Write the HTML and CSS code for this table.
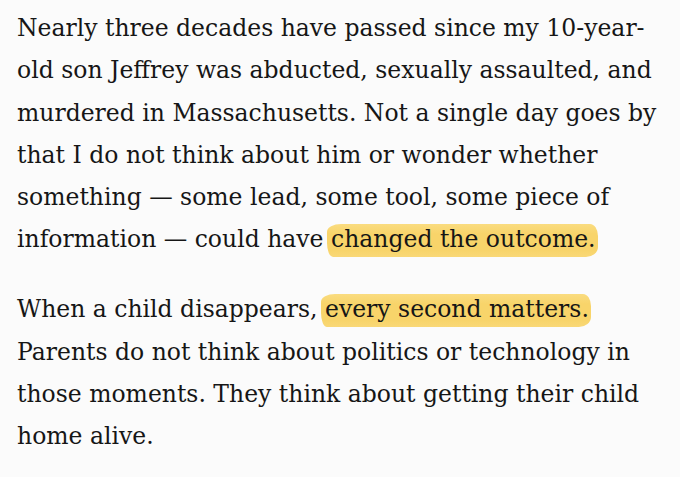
FILE: index.html
```html
<!DOCTYPE html>
<html lang="en">
<head>
<meta charset="utf-8">
<title>Article</title>
<link rel="stylesheet" href="styles.css">
</head>
<body>
<article class="article">
  <p class="para">Nearly three decades have passed since my 10-year-<br>old son Jeffrey was abducted, sexually assaulted, and<br>murdered in Massachusetts. Not a single day goes by<br>that I do not think about him or wonder whether<br>something — some lead, some tool, some piece of<br>information — could have <mark class="hl">changed the outcome.</mark></p>
  <p class="para">When a child disappears, <mark class="hl">every second matters.</mark><br>Parents do not think about politics or technology in<br>those moments. They think about getting their child<br>home alive.</p>
</article>
</body>
</html>
```

FILE: styles.css
```css
html, body {
  margin: 0;
  padding: 0;
  background: #fbfbfb;
}
.article {
  padding: 7px 0 0 17px;
  font-family: "DejaVu Serif", "Liberation Serif", serif;
  font-size: 23.5px;
  line-height: 1.8;
  color: #161616;
  white-space: nowrap;
}
.para {
  margin: 0 0 27.7px 0;
}
.hl {
  color: inherit;
  background: linear-gradient(180deg, #fadc80 0%, #f8d46a 30%, #f8d46a 80%, #f9d877 100%);
  padding: 1px 2px 4px 4px;
  margin-left: -4px;
  border-radius: 14px 8px 12px 6px / 8px 12px 10px 14px;
  -webkit-box-decoration-break: clone;
  box-decoration-break: clone;
}
```
